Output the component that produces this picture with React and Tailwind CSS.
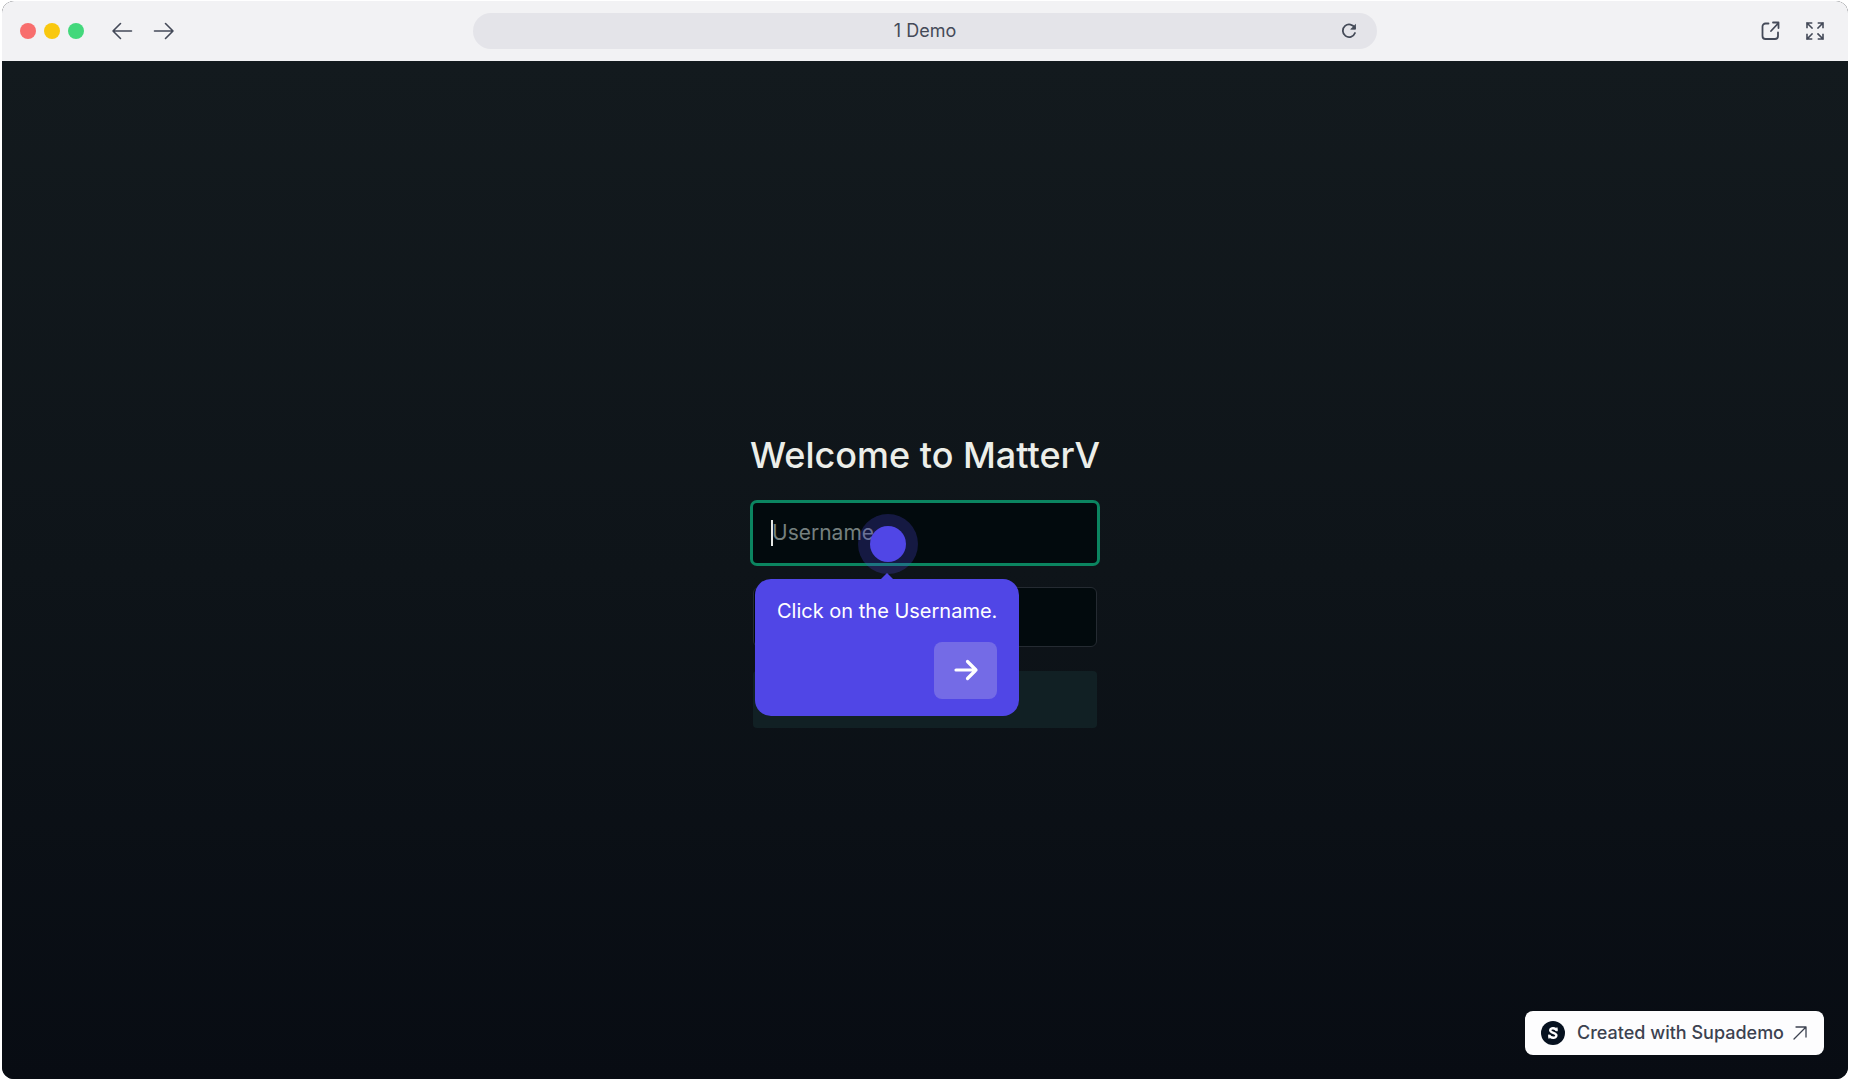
const stroke = {
  fill: "none",
  stroke: "currentColor",
  strokeLinecap: "round",
  strokeLinejoin: "round",
};

function IconButton({ label, children }) {
  return (
    <button type="button" aria-label={label} className="flex size-6 items-center justify-center">
      {children}
    </button>
  );
}

function BrowserBar() {
  return (
    <header className="grid h-15 grid-cols-[1fr_49%_1fr] items-center bg-[#f2f2f4] text-[#444a58]">
      <div className="flex items-center pl-[18px]">
        <div className="flex gap-2">
          <span className="size-4 rounded-full bg-[#f86e6d]" />
          <span className="size-4 rounded-full bg-[#f9c80e]" />
          <span className="size-4 rounded-full bg-[#43d87b]" />
        </div>
        <div className="ml-[26px] flex gap-[18px]">
          <IconButton label="Back">
            <svg viewBox="0 0 24 24" className="size-6" {...stroke} strokeWidth="1.6">
              <path d="M21.5 12H3M10.500 4.500 3 12l7.500 7.500" />
            </svg>
          </IconButton>
          <IconButton label="Forward">
            <svg viewBox="0 0 24 24" className="size-6" {...stroke} strokeWidth="1.6">
              <path d="M2.500 12H21M13.500 4.500 21 12l-7.500 7.500" />
            </svg>
          </IconButton>
        </div>
      </div>
      <div className="grid h-9 grid-cols-[1fr_auto_1fr] items-center rounded-full bg-[#e4e4e9] px-4">
        <span className="col-start-2 text-lg">1 Demo</span>
        <div className="flex justify-end">
          <IconButton label="Reload">
            <svg viewBox="0 0 24 24" className="size-6" {...stroke} strokeWidth="1.8">
              <path d="M17.800 9A6.300 6.300 0 1 0 18 14" />
              <path d="M18.500 5.800v4.400h-4.400z" fill="currentColor" strokeWidth="0.8" />
            </svg>
          </IconButton>
        </div>
      </div>
      <div className="flex justify-end gap-5 pr-[21px]">
        <IconButton label="Open in new tab">
          <svg viewBox="0 0 24 24" className="size-6" {...stroke} strokeWidth="1.8">
            <path d="M9.500 4.500H6.500A3 3 0 0 0 3.500 7.500V17a3 3 0 0 0 3 3h9.500a3 3 0 0 0 3-3v-3.500M12 12l7-7.500M14 3.500h5.500v5.500" />
          </svg>
        </IconButton>
        <IconButton label="Full screen">
          <svg viewBox="0 0 24 24" className="size-6" {...stroke} strokeWidth="1.6" strokeLinecap="square">
            <path d="M4 8.500V4h4.500M4 4l5 5M15.500 4H20v4.500M20 4l-5 5M4 15.500V20h4.500M4 20l5-5M20 15.500V20h-4.500M20 20l-5-5" />
          </svg>
        </IconButton>
      </div>
    </header>
  );
}

function Hotspot() {
  return (
    <div className="absolute top-[11px] left-[105px] flex size-15 items-center justify-center rounded-full bg-[#4f46e5]/25">
      <span className="size-9 rounded-full bg-[#5046e6]" />
    </div>
  );
}

function StepTooltip() {
  return (
    <div
      role="dialog"
      aria-label="Demo step"
      className="absolute top-[76px] left-0.5 rounded-2xl bg-[#5046e6] pt-[18px] pr-[22px] pb-[17px] pl-[22px] text-white"
    >
      <svg viewBox="0 0 14 7" className="absolute -top-1.5 left-[125px] h-[7px] w-3.5" fill="#5046e6">
        <path d="M0 7 7 0l7 7z" />
      </svg>
      <p className="text-xl leading-7 whitespace-nowrap">Click on the Username.</p>
      <button
        type="button"
        aria-label="Next step"
        className="mt-[17px] ml-auto flex h-[57px] w-[63px] items-center justify-center rounded-lg bg-[#746be6]"
      >
        <svg viewBox="0 0 28 28" className="size-7" {...stroke} strokeWidth="3.2">
          <path d="M4 14h20M15.500 5.500 24 14l-8.500 8.500" />
        </svg>
      </button>
    </div>
  );
}

function LoginForm() {
  return (
    <form className="flex w-[344px] flex-col pt-[18px]" onSubmit={(e) => e.preventDefault()}>
      <h1 className="mb-6 self-center text-4xl leading-12 font-medium whitespace-nowrap text-[#eceee9]">
        Welcome to MatterV
      </h1>
      <div className="relative z-10">
        <input
          type="text"
          aria-label="Username"
          placeholder="Username"
          className="block h-15 w-full rounded-sm bg-[#020a0d] pr-5 pl-[19px] text-[21px] text-white ring-3 ring-[#0b8560] outline-none placeholder:text-[#75807f]"
        />
        <span className="absolute top-[17px] left-[18px] h-[26px] w-0.5 bg-[#e5e7e5]" />
        <Hotspot />
        <StepTooltip />
      </div>
      <input
        type="password"
        aria-label="Password"
        className="mt-6 h-15 rounded-md border border-[#252b32] bg-[#020a0d] px-5 text-white outline-none"
      />
      <button type="submit" aria-label="Log in" className="mt-6 h-[57px] rounded-sm bg-[#112024]" />
    </form>
  );
}

export default function App() {
  return (
    <div className="flex min-h-screen flex-col bg-white px-0.5 pt-px pb-px font-['Inter',sans-serif]">
      <div className="flex grow flex-col overflow-hidden rounded-xl bg-[#0a0e14]">
        <BrowserBar />
        <main className="relative flex grow items-center justify-center bg-linear-to-b from-[#131a1e] via-[#0e1419] to-[#080c13]">
          <LoginForm />
          <a
            href="#supademo"
            className="absolute right-6 bottom-6 flex h-11 items-center rounded-lg bg-[#fdfdfe] px-4 text-lg font-medium text-[#3c4250]"
          >
            <svg viewBox="0 0 24 24" className="mr-3 size-6">
              <circle cx="12" cy="12" r="12" fill="#06111f" />
              <g fill="none" stroke="#fff">
                <path d="M15.600 9.600C14.800 6.800 9.200 6.400 9.200 9.300c0 3 6.200 2.200 6.200 5.200 0 3.200-6.200 2.800-7.200-.4" strokeWidth="2.400" />
                <path d="M15.900 6.500v3.700M8 13.600v4" strokeWidth="1.400" />
              </g>
            </svg>
            Created with Supademo
            <svg viewBox="0 0 16 16" className="ml-2 size-4" {...stroke} strokeWidth="1.3">
              <path d="M2 14 14 2M4 2h10v10" />
            </svg>
          </a>
        </main>
      </div>
    </div>
  );
}
